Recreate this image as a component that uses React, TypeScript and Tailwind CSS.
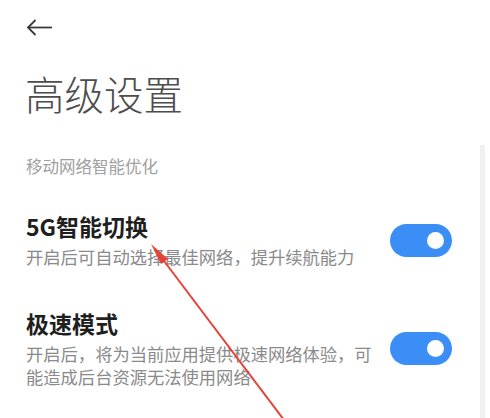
const settings = [
  {
    title: '5G智能切换',
    description: '开启后可自动选择最佳网络，提升续航能力',
  },
  {
    title: '极速模式',
    description: '开启后，将为当前应用提供极速网络体验，可能造成后台资源无法使用网络',
  },
];

function Toggle() {
  return (
    <div className="flex h-[33px] w-[62px] shrink-0 items-center justify-end rounded-full bg-[#3a8ef5] pr-[8px]">
      <div className="h-[17px] w-[17px] rounded-full bg-white" />
    </div>
  );
}

export default function App() {
  return (
    <div
      className="relative h-[418px] w-[490px] overflow-hidden bg-white"
      style={{ fontFamily: '"Noto Sans CJK SC", "Noto Sans", sans-serif' }}
    >
      <div className="pl-[26px] pt-[19px]">
        <svg width="27" height="17" viewBox="0 0 27 17" fill="none" stroke="#3a3a3a" strokeWidth="1.8">
          <path d="M26 8.5H2" />
          <path d="M9.5 1L2 8.5L9.5 16" />
        </svg>
      </div>

      <h1 className="mt-[37px] pl-[25px] text-[39.5px] font-light leading-[40px] text-[#4d4d4d]">高级设置</h1>

      <div className="mt-[43px] pl-[26px] text-[16.5px] leading-[20px] text-[#a0a0a0]">移动网络智能优化</div>

      <div className="mt-[36px] flex flex-col gap-[41px]">
        {settings.map((item, idx) => (
          <div key={idx} className="flex items-center gap-[10px] pl-[26px] pr-[38px]">
            <div className="flex-1">
              <div className="text-[23px] font-bold leading-[29px] text-[#1f1f1f]">{item.title}</div>
              <div className="mt-[4px] text-[17.3px] leading-[23px] text-[#8a8a8a]">{item.description}</div>
            </div>
            <Toggle />
          </div>
        ))}
      </div>

      <div className="absolute bottom-0 right-[5px] top-[145px] w-[5px] bg-[#f1f1f1]" />

      <svg className="pointer-events-none absolute left-0 top-0" width="490" height="418" viewBox="0 0 490 418">
        <line x1="158" y1="253" x2="284" y2="420" stroke="#e5433a" strokeWidth="2" />
        <polygon points="151,244 161,264 168,259" fill="#e5433a" />
      </svg>
    </div>
  );
}
